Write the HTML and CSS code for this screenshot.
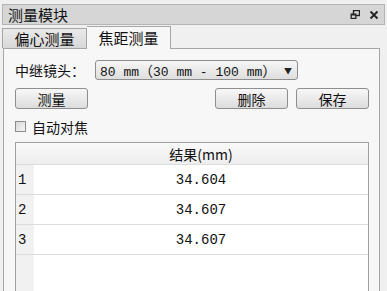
FILE: index.html
```html
<!doctype html>
<html>
<head>
<meta charset="utf-8">
<link rel="stylesheet" href="styles.css">
</head>
<body>
<div class="dock">
    <div class="titlebar">
        <span class="title">测量模块</span>
        <span class="tools">
            <svg width="10" height="10" viewBox="0 0 10 10"><rect x="3.5" y="0.5" width="6" height="5" fill="none" stroke="#222" stroke-width="1.4"/><rect x="0.5" y="3.5" width="6" height="5.5" fill="#222"/><rect x="1.8" y="5.5" width="3.4" height="2.3" fill="#d6d6d6"/></svg>
            <svg width="10" height="10" viewBox="0 0 10 10"><path d="M1.5 1.5 L8.5 8.5 M8.5 1.5 L1.5 8.5" stroke="#222" stroke-width="1.8"/></svg>
        </span>
    </div>
    <div class="tabs">
        <div class="tab">偏心测量</div>
        <div class="tab active">焦距测量</div>
    </div>
    <div class="panel">
        <div class="row">
            <span class="label">中继镜头：</span>
            <div class="combo"><span class="mono">80 mm<span class="wide">（</span>30 mm - 100 mm<span class="wide">）</span></span><span class="arrow">▼</span></div>
        </div>
        <div class="row btns">
            <button class="btn">测量</button>
            <span class="spacer"></span>
            <button class="btn">删除</button>
            <button class="btn">保存</button>
        </div>
        <div class="row check">
            <span class="box"></span>
            <span>自动对焦</span>
        </div>
        <div class="table">
            <div class="corner"></div>
            <div class="head">结果(mm)</div>
            <div class="num">1</div><div class="cell">34.604</div>
            <div class="num">2</div><div class="cell">34.607</div>
            <div class="num">3</div><div class="cell">34.607</div>
            <div class="num fill"></div><div class="cell fill"></div>
        </div>
    </div>
</div>
</body>
</html>
```

FILE: styles.css
```css
body {
    margin: 0;
    background: #f0f0f0;
    font-family: "Noto Sans CJK SC", sans-serif;
    font-size: 14px;
    color: #111;
    overflow: hidden;
}
.dock {
    display: flex;
    flex-direction: column;
    height: 291px;
    padding: 4px 2px 0 2px;
    box-sizing: border-box;
}
.titlebar {
    display: flex;
    align-items: center;
    height: 19px;
    background: #d6d6d6;
    border: 1px solid #b4b4b4;
    padding: 0 5px;
}
.title {
    font-size: 15px;
    line-height: 19px;
    flex: 1;
}
.tools {
    display: flex;
    gap: 9px;
    align-items: center;
}
.tabs {
    display: flex;
    align-items: flex-end;
    height: 23px;
}
.tab {
    width: 83px;
    height: 19px;
    text-align: center;
    font-size: 15px;
    line-height: 19px;
    background: linear-gradient(#eaeaea, #d8d8d8);
    border: 1px solid #a6a6a6;
    border-bottom: none;
}
.tab.active {
    height: 22px;
    line-height: 22px;
    background: #f7f7f7;
    border-left: none;
    position: relative;
    top: 1px;
}
.panel {
    flex: 1;
    margin-right: 5px;
    margin-left: 1px;
    background: #f7f7f7;
    border: 1px solid #a6a6a6;
    border-bottom: none;
    padding: 11px 10px 0 11px;
    display: flex;
    flex-direction: column;
}
.row {
    display: flex;
    align-items: center;
}
.label {
    width: 80px;
}
.combo {
    display: flex;
    align-items: center;
    justify-content: space-between;
    padding: 0 5px 0 4px;
    box-sizing: border-box;
    width: 203px;
    height: 20px;
    border: 1px solid #8e8e8e;
    border-radius: 3px;
    background: linear-gradient(#f6f6f6, #dedede);
}
.mono {
    font-family: "Liberation Mono", monospace;
    font-size: 13px;
    white-space: nowrap;
}
.wide {
    font-family: "Noto Sans CJK SC", sans-serif;
    font-size: 14px;
}
.arrow {
    font-size: 8px;
    color: #222;
}
.btns {
    margin-top: 8px;
    gap: 8px;
}
.spacer {
    flex: 1;
}
.btn {
    width: 73px;
    height: 21px;
    padding: 0;
    font-family: "Noto Sans CJK SC", sans-serif;
    font-size: 14px;
    line-height: 18px;
    color: #111;
    border: 1px solid #8e8e8e;
    border-radius: 3px;
    background: linear-gradient(#f8f8f8, #dcdcdc);
}
.check {
    margin-top: 9px;
    gap: 6px;
    height: 17px;
}
.box {
    width: 9px;
    height: 9px;
    border: 1px solid #8e8e8e;
    background: linear-gradient(135deg, #d8d8d8, #f6f6f6);
}
.table {
    margin-top: 7px;
    flex: 1;
    display: grid;
    grid-template-columns: 18px 1fr;
    grid-template-rows: 22px 30px 30px 30px 1fr;
    background: #fff;
    border: 1px solid #a0a0a0;
    border-bottom: none;
}
.corner, .head {
    background: linear-gradient(#f9f9f9, #eeeeee);
    border-bottom: 1px solid #dcdcdc;
}
.head {
    text-align: center;
    line-height: 22px;
}
.num {
    background: #f1f1f1;
    border-bottom: 1px solid #dcdcdc;
    font-family: "Liberation Mono", monospace;
    padding-left: 2px;
    line-height: 30px;
}
.cell {
    border-bottom: 1px solid #dcdcdc;
    text-align: center;
    line-height: 30px;
    font-family: "Liberation Mono", monospace;
}
.fill {
    border-bottom: none;
}
```
